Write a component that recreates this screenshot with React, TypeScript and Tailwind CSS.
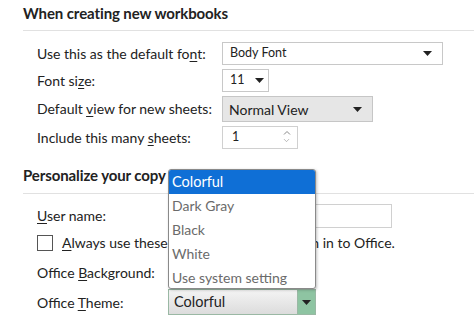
import { ChevronDown } from 'lucide-react'

const caret = (
  <svg width="9" height="5" viewBox="0 0 9 5" className="shrink-0">
    <path d="M0 0h9L4.5 5z" fill="#222" />
  </svg>
)

function U({ children }: { children: string }) {
  return <span className="underline underline-offset-2 decoration-1">{children}</span>
}

export default function App() {
  return (
    <div
      className="relative w-[474px] h-[326px] overflow-hidden bg-white text-[#222] text-[14px] whitespace-nowrap"
      style={{ fontFamily: 'Lato, "Noto Sans", sans-serif' }}
    >
      <div className="pl-[23px] pt-[3px]">
        <h2 className="font-bold text-[15px] leading-[20px] tracking-[-0.1px]">When creating new workbooks</h2>
        <div className="mt-[7px] h-px bg-[#e1e1e1]" />

        <div className="mt-[11px] pl-[14px] grid grid-cols-[185px_auto] items-center gap-y-[4px]">
          <span className="leading-[22px]">Use this as the default fo<U>n</U>t:</span>
          <div className="w-[221px] h-[23px] border border-[#c8c8c8] bg-white flex items-center justify-between pl-[7px] pr-[10px] text-[12.5px]">
            <span>Body Font</span>
            {caret}
          </div>

          <span className="leading-[22px]">Font si<U>z</U>e:</span>
          <div className="w-[47px] h-[23px] border border-[#c8c8c8] bg-white flex items-center gap-[10px] pl-[7px] text-[12.5px]">
            <span>11</span>
            {caret}
          </div>

          <span className="leading-[22px]">Default <U>v</U>iew for new sheets:</span>
          <div className="w-[151px] h-[26px] border border-[#c6c6c6] bg-[#e6e6e6] flex items-center justify-between pl-[6px] pr-[10px] text-[14px]">
            <span>Normal View</span>
            {caret}
          </div>

          <span className="leading-[22px]">Include this many <U>s</U>heets:</span>
          <div className="w-[76px] h-[23px] border border-[#d0d0d0] bg-white flex items-center justify-between pl-[9px] pr-[6px] text-[12.5px]">
            <span>1</span>
            <div className="flex flex-col items-center text-[#888]">
              <svg width="8" height="5" viewBox="0 0 8 5"><path d="M1 4.5L4 1.5l3 3" stroke="#888" fill="none" /></svg>
              <ChevronDown size={9} strokeWidth={1.5} className="mt-[1px]" />
            </div>
          </div>
        </div>

        <h2 className="mt-[16px] font-bold text-[15px] leading-[20px] tracking-[-0.1px]">Personalize your copy of Microsoft Office</h2>
        <div className="mt-[8px] h-px bg-[#e1e1e1]" />

        <div className="mt-[10px] pl-[14px] flex items-center">
          <span className="w-[185px] leading-[22px]"><U>U</U>ser name:</span>
          <div className="w-[170px] h-[24px] border border-[#d0d0d0] bg-white" />
        </div>

        <div className="mt-[3px] pl-[14px] flex items-center gap-[9px]">
          <div className="w-[16px] h-[16px] border border-[#555] bg-white" />
          <span className="leading-[24px]"><U>A</U>lways use these values regardless of sign in to Office.</span>
        </div>

        <div className="mt-[4px] pl-[14px] flex items-center h-[26px]">
          <span className="w-[131px]">Office <U>B</U>ackground:</span>
        </div>

        <div className="mt-[4px] pl-[14px] flex items-center">
          <span className="w-[131px]">Office <U>T</U>heme:</span>
          <div className="w-[148px] h-[26px] border border-[#9ab8a4] flex">
            <div className="flex-1 flex items-center pl-[5px] bg-gradient-to-b from-[#f4f4f4] to-[#dcdcdc] text-[14.5px]">Colorful</div>
            <div className="w-[18px] border-l border-[#9ab8a4] bg-[#8ec4a2] flex items-center justify-center">{caret}</div>
          </div>
        </div>
      </div>

      <div className="absolute left-[168px] top-[169px] w-[148px] h-[120px] border border-[#8a8a8a] rounded-[3px] bg-white shadow-[1px_1px_3px_rgba(0,0,0,0.25)] overflow-hidden text-[14px] text-[#6b6b6b]">
        <div className="h-[24px] leading-[24px] pl-[3px] bg-[#0f6fd6] text-white text-[14.5px]">Colorful</div>
        <div className="h-[24px] leading-[24px] pl-[3px]">Dark Gray</div>
        <div className="h-[24px] leading-[24px] pl-[3px]">Black</div>
        <div className="h-[24px] leading-[24px] pl-[3px]">White</div>
        <div className="h-[24px] leading-[24px] pl-[3px]">Use system setting</div>
      </div>
    </div>
  )
}
